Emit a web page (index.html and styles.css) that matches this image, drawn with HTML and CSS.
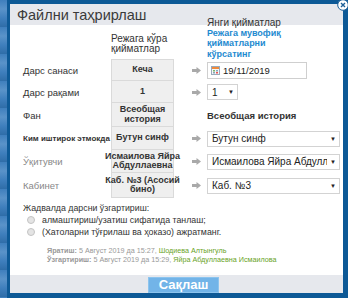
FILE: index.html
```html
<!DOCTYPE html>
<html lang="uz">
<head>
  <meta charset="UTF-8">
  <title>Файлни таҳрирлаш</title>
  <link rel="stylesheet" href="styles.css">
</head>
<body>
  <div class="screen">
    <div class="page-behind"></div>
    <div class="frame">
      <div class="dialog">
        <div class="dialog-header">
          <span class="dialog-title">Файлни таҳрирлаш</span>
          <span class="close">
            <svg width="12" height="12" viewBox="0 0 12 12"><circle cx="6" cy="6" r="5.3" fill="#fff" stroke="#1d5f97" stroke-width="1"/><path d="M4 4l4 4M8 4l-4 4" stroke="#1d5f97" stroke-width="1.4"/></svg>
          </span>
        </div>

        <div class="dialog-body">
          <div class="grid">
            <div></div>
            <div class="col-head">
              <div>Режага кўра<br>қийматлар</div>
            </div>
            <div></div>
            <div class="col-head new">
              <div>Янги қийматлар<br><a class="link">Режага мувофиқ қийматларни<br>кўрсатинг</a></div>
            </div>

            <div class="label">Дарс санаси</div>
            <div class="box first">Кеча</div>
            <div class="arrow"><svg width="9" height="7" viewBox="0 0 9 7"><path d="M0 2h4.5V0L9 3.5 4.5 7V5H0z" fill="#a9a9a9"/></svg></div>
            <div class="ctl">
              <div class="date">
                <svg width="9" height="9" viewBox="0 0 9 9"><rect x="0.5" y="0.5" width="8" height="8" fill="#f6f6f6" stroke="#9ab"/><rect x="1" y="1" width="7" height="2" fill="#f08a3c"/><rect x="2" y="4" width="2" height="1.5" fill="#7bb36b"/><rect x="5" y="4" width="2" height="1.5" fill="#8ab"/><rect x="2" y="6" width="2" height="1.5" fill="#8ab"/><rect x="5" y="6" width="2" height="1.5" fill="#e55"/></svg>
                <span>19/11/2019</span>
              </div>
            </div>

            <div class="label">Дарс рақами</div>
            <div class="box">1</div>
            <div class="arrow"><svg width="9" height="7" viewBox="0 0 9 7"><path d="M0 2h4.5V0L9 3.5 4.5 7V5H0z" fill="#a9a9a9"/></svg></div>
            <div class="ctl">
              <div class="select small"><span class="val">1</span><span class="caret">▼</span></div>
            </div>

            <div class="label">Фан</div>
            <div class="box">Всеобщая<br>история</div>
            <div></div>
            <div class="ctl plain">Всеобщая история</div>

            <div class="label strong">Ким иштирок этмокда</div>
            <div class="box">Бутун синф</div>
            <div class="arrow"><svg width="9" height="7" viewBox="0 0 9 7"><path d="M0 2h4.5V0L9 3.5 4.5 7V5H0z" fill="#a9a9a9"/></svg></div>
            <div class="ctl">
              <div class="select"><span class="val">Бутун синф</span><span class="caret">▼</span></div>
            </div>

            <div class="label muted">Ўқитувчи</div>
            <div class="box">Исмаилова Яйра<br>Абдуллаевна</div>
            <div class="arrow"><svg width="9" height="7" viewBox="0 0 9 7"><path d="M0 2h4.5V0L9 3.5 4.5 7V5H0z" fill="#a9a9a9"/></svg></div>
            <div class="ctl">
              <div class="select"><span class="val">Исмаилова Яйра Абдуллаевна</span><span class="caret">▼</span></div>
            </div>

            <div class="label muted">Кабинет</div>
            <div class="box">Каб. №3 (Асосий<br>бино)</div>
            <div class="arrow"><svg width="9" height="7" viewBox="0 0 9 7"><path d="M0 2h4.5V0L9 3.5 4.5 7V5H0z" fill="#a9a9a9"/></svg></div>
            <div class="ctl">
              <div class="select"><span class="val">Каб. №3</span><span class="caret">▼</span></div>
            </div>
          </div>

          <div class="change">
            <div class="change-title">Жадвалда дарсни ўзгартириш:</div>
            <div class="radio"><span class="dot"></span>алмаштириш/узатиш сифатида танлаш;</div>
            <div class="radio"><span class="dot"></span>(Хатоларни тўғрилаш ва ҳоказо) ажратманг.</div>
          </div>

          <div class="meta">
            <div><b>Яратиш:</b> 5 Август 2019 да 15:27, <span class="user">Шодиева Алтынгуль</span></div>
            <div><b>Ўзгартириш:</b> 5 Август 2019 да 15:29, <span class="user">Яйра Абдуллаевна Исмаилова</span></div>
          </div>
        </div>

        <div class="dialog-footer">
          <button class="save">Сақлаш</button>
        </div>
      </div>
    </div>
  </div>
</body>
</html>
```

FILE: styles.css
```css
body {
  margin: 0;
  padding: 0;
  font-family: "Liberation Sans Narrow", "Liberation Sans", Arial, sans-serif;
  color: #333;
  background-color: #0d5996;
}
.screen {
  display: flex;
  width: 348px;
  height: 298px;
  overflow: hidden;
}
.page-behind {
  width: 7px;
  background: repeating-linear-gradient(180deg, #3f7fbd 0, #5a93c9 9px, #3f7fbd 18px, #2f6da8 27px);
}
.frame {
  flex: 1;
  padding: 4px 5px 5px 3px;
  background-color: #0d5996;
}
.dialog {
  position: relative;
  display: flex;
  flex-direction: column;
  height: 289px;
  background-color: #fff;
}
.dialog-header {
  height: 21px;
  flex-shrink: 0;
  display: flex;
  align-items: center;
  padding-left: 7px;
  background-color: #e6e8ed;
}
.dialog-title {
  font-size: 14.5px;
  color: #3a3a3a;
}
.close {
  position: absolute;
  top: -5px;
  right: -6px;
  width: 12px;
  height: 12px;
}
.close svg {
  display: block;
}
.dialog-body {
  flex: 1;
  padding: 4px 3px 0 13px;
}
.grid {
  display: grid;
  grid-template-columns: 88px 63px 33px 133px;
  grid-template-rows: 30px 22px 22px 24px 23px 23px 25px;
}
.col-head {
  display: flex;
  align-items: center;
  font-size: 10px;
  line-height: 10px;
  color: #333;
}
.col-head.new {
  align-items: flex-end;
  line-height: 9.5px;
}
.link {
  color: #1e8ad0;
  font-size: 9px;
  font-weight: bold;
}
.label {
  display: flex;
  align-items: center;
  white-space: nowrap;
  font-size: 9.5px;
  color: #333;
}
.label.strong {
  font-size: 8px;
  font-weight: bold;
}
.label.muted {
  color: #888;
}
.box {
  display: flex;
  align-items: center;
  justify-content: center;
  box-sizing: border-box;
  padding: 1px 0;
  text-align: center;
  white-space: nowrap;
  font-size: 9px;
  line-height: 9.5px;
  font-weight: bold;
  color: #333;
  background-color: #efefef;
  border: 1px solid #dadada;
  border-top: none;
}
.box.first {
  border-top: 1px solid #dadada;
}
.arrow {
  display: flex;
  align-items: center;
  justify-content: flex-end;
  padding-right: 6px;
}
.arrow svg {
  display: block;
}
.ctl {
  display: flex;
  align-items: center;
}
.ctl.plain {
  font-size: 9.5px;
  font-weight: bold;
  color: #333;
}
.date {
  width: 100px;
  height: 17px;
  box-sizing: border-box;
  display: flex;
  align-items: center;
  gap: 3px;
  padding-left: 3px;
  border: 1px solid #cfcfcf;
  font-size: 9.5px;
  color: #222;
}
.date svg {
  display: block;
}
.select {
  width: 133px;
  height: 16px;
  box-sizing: border-box;
  display: flex;
  align-items: center;
  padding: 0 3px 0 4px;
  border: 1px solid #d3d3d3;
  font-size: 10px;
  color: #222;
  overflow: hidden;
}
.select.small {
  width: 31px;
}
.val {
  flex: 1;
  white-space: nowrap;
  overflow: hidden;
}
.caret {
  font-size: 6px;
  color: #222;
  padding-left: 3px;
}
.change {
  margin-top: 4px;
  font-family: "Liberation Sans", Arial, sans-serif;
  font-size: 8.8px;
  line-height: 12px;
  color: #333;
}
.radio {
  display: flex;
  align-items: center;
  padding-left: 4px;
}
.dot {
  width: 6px;
  height: 6px;
  margin-right: 7px;
  border-radius: 50%;
  border: 1px solid #c4c4c4;
  background-color: #e4e4e4;
}
.meta {
  margin-top: 9px;
  padding-left: 24px;
  white-space: nowrap;
  font-family: "Liberation Sans", Arial, sans-serif;
  font-size: 7.2px;
  line-height: 8.5px;
  color: #999;
}
.meta b {
  color: #999;
}
.user {
  color: #6aa31f;
}
.dialog-footer {
  height: 18px;
  flex-shrink: 0;
  display: flex;
  justify-content: center;
  align-items: flex-end;
  background-color: #e6e8ed;
}
.save {
  width: 71px;
  height: 16px;
  margin-left: 14px;
  padding: 0;
  border: 1px solid #8cc4ee;
  background-color: #72b4e8;
  color: #fff;
  font-family: inherit;
  font-size: 13px;
  font-weight: bold;
  line-height: 14px;
}
```
